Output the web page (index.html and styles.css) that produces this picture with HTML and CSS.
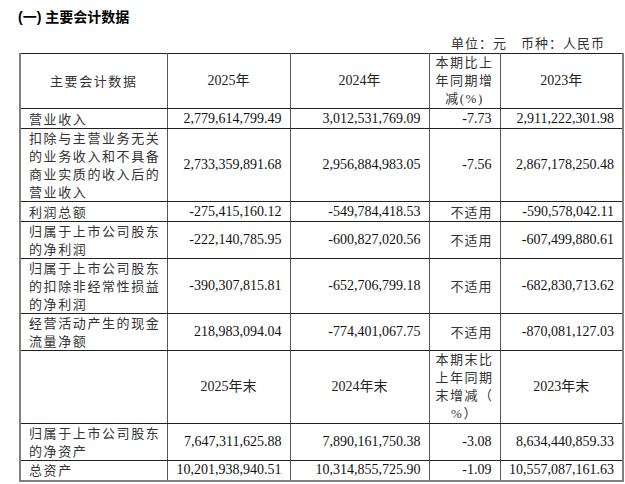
FILE: index.html
```html
<!DOCTYPE html>
<html lang="zh-CN">
<head>
<meta charset="utf-8">
<link rel="stylesheet" href="styles.css">
</head>
<body>
<div class="page">
  <h2 class="title">(一) 主要会计数据</h2>
  <div class="units">单位：元　币种：人民币</div>
  <table class="data">
    <colgroup>
      <col class="c1"><col class="c2"><col class="c3"><col class="c4"><col class="c5">
    </colgroup>
    <tr class="h55">
      <th class="lbl">主要会计数据</th>
      <th>2025年</th>
      <th>2024年</th>
      <th class="cjk">本期比上<br>年同期增<br>减(%)</th>
      <th>2023年</th>
    </tr>
    <tr class="h20">
      <td class="lbl">营业收入</td>
      <td class="num">2,779,614,799.49</td>
      <td class="num">3,012,531,769.09</td>
      <td class="num">-7.73</td>
      <td class="num">2,911,222,301.98</td>
    </tr>
    <tr class="h73">
      <td class="lbl">扣除与主营业务无关<br>的业务收入和不具备<br>商业实质的收入后的<br>营业收入</td>
      <td class="num">2,733,359,891.68</td>
      <td class="num">2,956,884,983.05</td>
      <td class="num">-7.56</td>
      <td class="num">2,867,178,250.48</td>
    </tr>
    <tr class="h20">
      <td class="lbl">利润总额</td>
      <td class="num">-275,415,160.12</td>
      <td class="num">-549,784,418.53</td>
      <td class="num na">不适用</td>
      <td class="num">-590,578,042.11</td>
    </tr>
    <tr class="h37">
      <td class="lbl">归属于上市公司股东<br>的净利润</td>
      <td class="num">-222,140,785.95</td>
      <td class="num">-600,827,020.56</td>
      <td class="num na">不适用</td>
      <td class="num">-607,499,880.61</td>
    </tr>
    <tr class="h55">
      <td class="lbl">归属于上市公司股东<br>的扣除非经常性损益<br>的净利润</td>
      <td class="num">-390,307,815.81</td>
      <td class="num">-652,706,799.18</td>
      <td class="num na">不适用</td>
      <td class="num">-682,830,713.62</td>
    </tr>
    <tr class="h37">
      <td class="lbl">经营活动产生的现金<br>流量净额</td>
      <td class="num">218,983,094.04</td>
      <td class="num">-774,401,067.75</td>
      <td class="num na">不适用</td>
      <td class="num">-870,081,127.03</td>
    </tr>
    <tr class="h73">
      <th class="lbl"></th>
      <th>2025年末</th>
      <th>2024年末</th>
      <th class="cjk">本期末比<br>上年同期<br>末增减（<br>%）</th>
      <th>2023年末</th>
    </tr>
    <tr class="h37">
      <td class="lbl">归属于上市公司股东<br>的净资产</td>
      <td class="num">7,647,311,625.88</td>
      <td class="num">7,890,161,750.38</td>
      <td class="num">-3.08</td>
      <td class="num">8,634,440,859.33</td>
    </tr>
    <tr class="h20 last">
      <td class="lbl">总资产</td>
      <td class="num">10,201,938,940.51</td>
      <td class="num">10,314,855,725.90</td>
      <td class="num">-1.09</td>
      <td class="num">10,557,087,161.63</td>
    </tr>
  </table>
</div>
</body>
</html>
```

FILE: styles.css
```css
html, body {
  margin: 0;
  padding: 0;
  background: #ffffff;
}

.page {
  padding: 7px 0 0 19px;
  width: 603px;
  font-family: "Liberation Serif", "Noto Sans CJK SC", serif;
  color: #111;
}

.title {
  margin: 0 0 0 -1px;
  font-family: "Liberation Sans", "Noto Sans CJK SC", sans-serif;
  font-size: 14px;
  font-weight: bold;
  line-height: 20px;
  height: 20px;
  color: #000;
}

.units {
  margin-top: 6px;
  height: 20px;
  line-height: 20px;
  text-align: right;
  padding-right: 17px;
  font-family: "Noto Sans CJK SC", sans-serif;
  font-size: 13px;
  letter-spacing: 1px;
  color: #333;
}

.data {
  border-collapse: collapse;
  table-layout: fixed;
  width: 603px;
  border-top: 1px solid #222;
  border-left: 2px solid #808080;
  border-right: 2px solid #808080;
  border-bottom: 2px solid #808080;
}

.c1 { width: 147px; }
.c2 { width: 123px; }
.c3 { width: 139px; }
.c4 { width: 71px; }
.c5 { width: 123px; }

.data th,
.data td {
  border-top: 1px solid #222;
  border-bottom: 1px solid #222;
  border-left: 1px solid #555;
  border-right: 1px solid #555;
  padding: 0;
  font-size: 14px;
  line-height: 18px;
  font-weight: normal;
  white-space: nowrap;
  overflow: hidden;
}

.data th {
  text-align: center;
  color: #222;
}

.data th.cjk {
  font-family: "Liberation Serif", "Noto Sans CJK SC", serif;
  font-size: 13px;
  letter-spacing: 1.5px;
  color: #333;
}

.data td.lbl,
.data th.lbl {
  font-family: "Noto Sans CJK SC", sans-serif;
  font-size: 13px;
  letter-spacing: 1.6px;
  color: #333;
  text-align: left;
  padding-left: 8px;
}

.data th.lbl {
  text-align: center;
  padding-left: 0;
}

.data td.num {
  text-align: right;
  padding-right: 8px;
  color: #111;
}

.data td.na {
  font-family: "Noto Sans CJK SC", sans-serif;
  font-size: 13px;
  letter-spacing: 1px;
  padding-right: 7px;
  color: #333;
}

.h20 { height: 20px; }
.h37 { height: 37px; }
.h55 { height: 55px; }
.h73 { height: 73px; }
```
